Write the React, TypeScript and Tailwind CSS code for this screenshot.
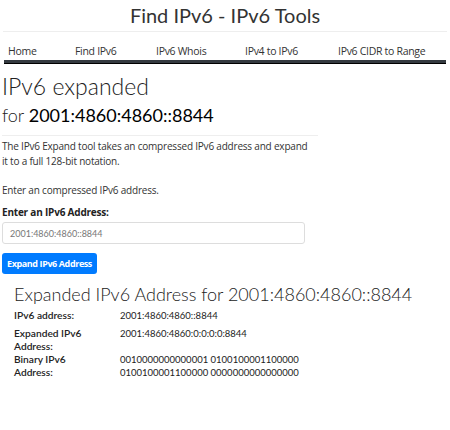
const ROWS: { label: string[]; value: string[]; gap: string }[] = [
  { label: ['IPv6 address:'], value: ['2001:4860:4860::8844'], gap: 'mb-[5px]' },
  { label: ['Expanded IPv6', 'Address:'], value: ['2001:4860:4860:0:0:0:0:8844'], gap: 'mb-0' },
  { label: ['Binary IPv6', 'Address:'], value: ['0010000000000001 0100100001100000', '0100100001100000 0000000000000000'], gap: 'mb-0' },
];

export default function App() {
  return (
    <div className="w-[450px] h-[430px] bg-white text-[#212529] overflow-hidden [font-family:Lato,sans-serif]">
      <h1 className="text-center text-[20px] leading-[26px] pt-[2px] text-[#333]">Find IPv6 - IPv6 Tools</h1>
      <div className="mx-[3px] mt-[3px] border-t border-[#eee]" />

      <nav className="mx-[4px] mt-[12px] h-[14px] pt-[2px] flex items-center text-[10.5px] text-[#333] [font-family:'Open_Sans',sans-serif] tracking-[-0.3px]">
        <span className="pl-[4px] w-[71px]">Home</span>
        <span className="w-[81px]">Find IPv6</span>
        <span className="w-[89px]">IPv6 Whois</span>
        <span className="w-[93px]">IPv4 to IPv6</span>
        <span>IPv6 CIDR to Range</span>
      </nav>
      <div className="mx-[4px] mt-[2px] h-[4px] bg-[#343a40] border-b border-black" />

      <div className="px-[2px]">
        <h2 className="mt-[8px] text-[23px] leading-[28px] font-light text-[#222]">IPv6 expanded</h2>
        <div className="mt-[3px] text-[18px] leading-[24px] font-light text-[#222]">
          for <span className="font-normal text-black">2001:4860:4860::8844</span>
        </div>
        <div className="mt-[8px] w-[316px] border-t border-[#eee]" />

        <div className="[font-family:'Open_Sans',sans-serif] text-[10px] leading-[15px] text-[#333] tracking-[-0.2px]">
          <p className="mt-[3px] w-[310px]">
            The IPv6 Expand tool takes an compressed IPv6 address and expand it to a full 128-bit notation.
          </p>
          <p className="mt-[14px]">Enter an compressed IPv6 address.</p>
          <label className="block mt-[7px] font-bold text-[#222]">Enter an IPv6 Address:</label>
          <div className="mt-[2px] w-[303px] h-[22px] border border-[#ddd] rounded-[3px] flex items-center pl-[7px] text-[9px] text-[#777] [font-family:Lato,sans-serif] tracking-normal">
            2001:4860:4860::8844
          </div>
          <button className="mt-[9px] h-[21px] w-[95px] rounded-[3px] bg-[#007bff] text-white text-[9px] font-bold tracking-[-0.4px]">
            Expand IPv6 Address
          </button>
        </div>

        <div className="pl-[12px]">
          <h3 className="mt-[9px] text-[18px] leading-[22px] text-[#222] font-light">
            Expanded IPv6 Address for 2001:4860:4860::8844
          </h3>
          <div className="mt-[4px] text-[9.5px] leading-[13px] text-[#222]">
            {ROWS.map((row) => (
              <div key={row.label[0]} className={`flex ${row.gap}`}>
                <div className="w-[106px] font-semibold text-[10.2px]">
                  {row.label.map((l) => (
                    <div key={l}>{l}</div>
                  ))}
                </div>
                <div>
                  {row.value.map((v) => (
                    <div key={v}>{v}</div>
                  ))}
                </div>
              </div>
            ))}
          </div>
        </div>
      </div>
    </div>
  );
}
